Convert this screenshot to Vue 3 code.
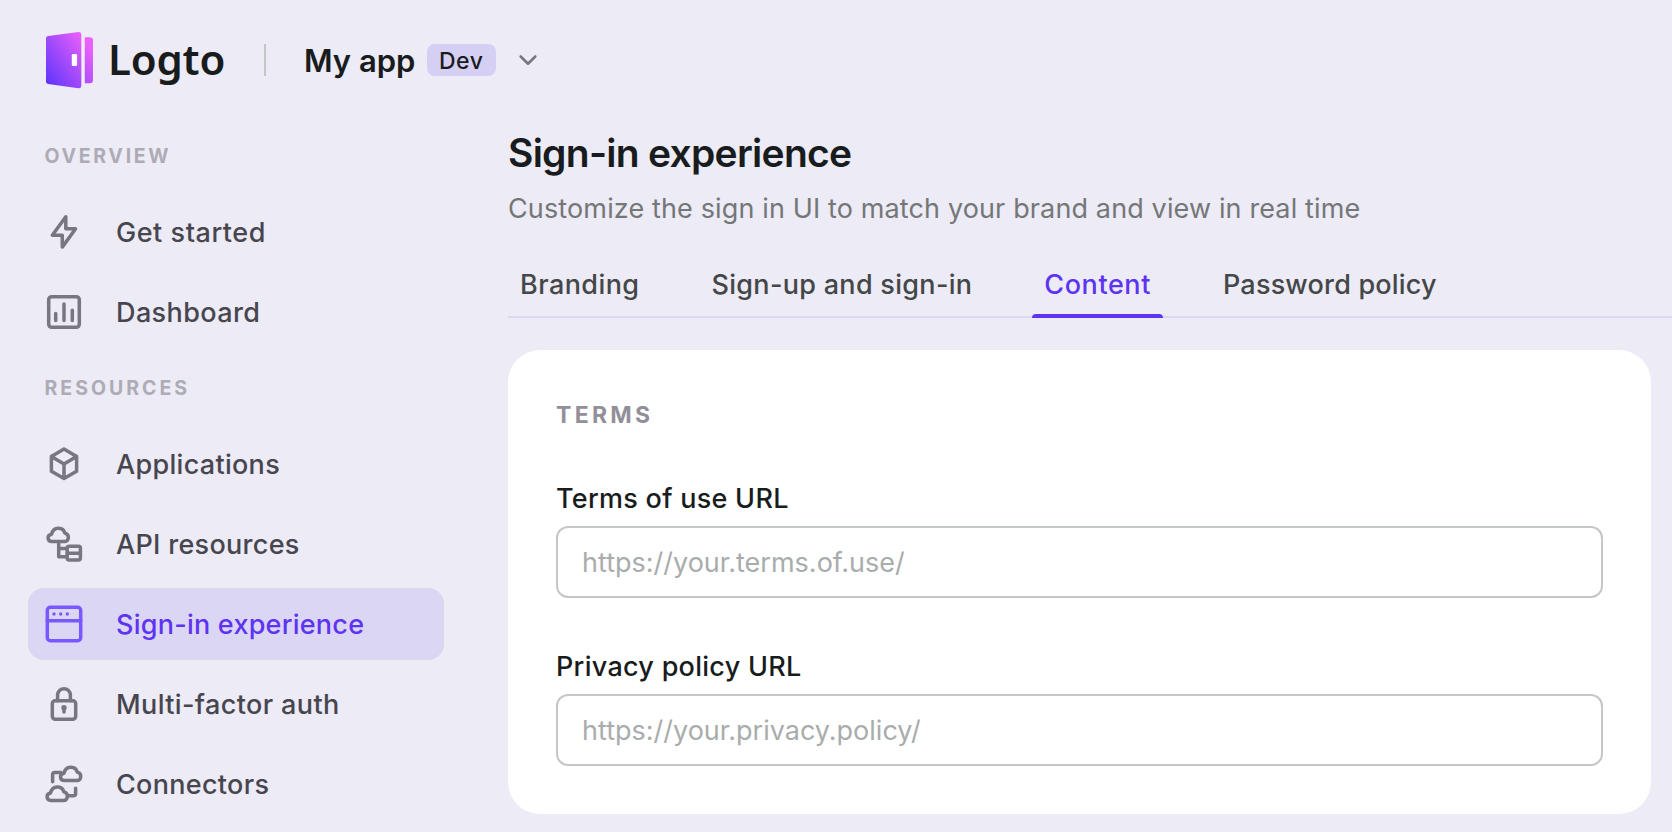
<script setup>
const sections = [
  {
    title: 'OVERVIEW',
    id: 'overview',
    items: [
      { id: 'bolt', label: 'Get started' },
      { id: 'chart', label: 'Dashboard' },
    ],
  },
  {
    title: 'RESOURCES',
    id: 'resources',
    items: [
      { id: 'box', label: 'Applications' },
      { id: 'api', label: 'API resources' },
      { id: 'web', label: 'Sign-in experience', active: true },
      { id: 'lock', label: 'Multi-factor auth' },
      { id: 'connectors', label: 'Connectors' },
    ],
  },
]
const tabs = [
  { id: 'branding', label: 'Branding' },
  { id: 'sign-up', label: 'Sign-up and sign-in' },
  { id: 'content', label: 'Content', active: true },
  { id: 'password', label: 'Password policy' },
]
const fields = [
  { id: 'terms', label: 'Terms of use URL', placeholder: 'https://your.terms.of.use/' },
  { id: 'privacy', label: 'Privacy policy URL', placeholder: 'https://your.privacy.policy/' },
]
const cloud = 'M8 17.6C2.9 17.6 2.8 10.9 7.6 10.2C9.2 2.4 19.2 2.4 20.8 9.1C25.9 10.2 25.3 17.6 20.4 17.6Z'
</script>

<template>
  <div class="page">
    <header class="topbar">
      <div class="brand">
        <svg class="logo" viewBox="0 0 47 57">
          <defs>
            <linearGradient id="door" x1="0" y1="48" x2="46" y2="16" gradientUnits="userSpaceOnUse">
              <stop offset="0" stop-color="#6236fb" />
              <stop offset="1" stop-color="#ec61fb" />
            </linearGradient>
          </defs>
          <path fill="url(#door)" d="M2.2 3.9L32.5.1Q35.3-.1 35.3 2.6V53.7Q35.3 56.4 32.5 56.2L2.2 52.1Q0 51.8 0 49.8V6.3Q0 4.2 2.2 3.9Z" />
          <path fill="url(#door)" d="M38.8 5.3H43.8Q47 5.3 47 8.5V48Q47 51.2 43.8 51.2H38.8Z" />
          <rect x="25.8" y="22" width="5.3" height="12" rx="1.3" fill="#fff" />
        </svg>
        <span class="word">Logto</span>
      </div>
      <div class="divider"></div>
      <div class="tenant">
        <span class="app-name">My app</span>
        <span class="badge">Dev</span>
        <svg class="chevron" viewBox="0 0 40 40"><path d="M12.7 16.5L20 23.7L27.3 16.5" /></svg>
      </div>
    </header>

    <div class="body">
      <aside class="sidebar">
        <section v-for="s in sections" :key="s.id" class="section">
          <div class="section-title" :class="s.id">{{ s.title }}</div>
          <nav class="items">
            <a v-for="i in s.items" :key="i.id" class="item" :class="[i.id, { active: i.active }]">
              <svg class="icon" viewBox="0 0 40 40">
                <path v-if="i.id === 'bolt'" d="M21.8 4.8L8.3 23.2H18.3V35.1L31.6 16.8H21.8Z" />
                <g v-else-if="i.id === 'chart'">
                  <rect x="4.7" y="4.7" width="30.6" height="30.6" rx="3" />
                  <path d="M11.7 21.6V28.4M20 12V28.4M28.3 18.3V28.4" />
                </g>
                <path v-else-if="i.id === 'box'" d="M20 5.1L32.6 12.4V27.3L20 34.6L7.4 27.3V12.4ZM7.4 12.4L20 19.9L32.6 12.4M20 19.9V34.6" />
                <g v-else-if="i.id === 'api'">
                  <path :d="cloud" />
                  <path d="M14.7 17.6V32.8H22.5M14.7 24.6H22.5M23.2 29.2H36.4" />
                  <rect x="23.2" y="22.2" width="13.2" height="13.9" rx="2" />
                </g>
                <g v-else-if="i.id === 'web'">
                  <rect x="3.3" y="3.3" width="33.4" height="33.4" rx="3" />
                  <path d="M3.3 16.7H36.7" />
                  <g class="solid">
                    <circle cx="10" cy="10" r="1.7" />
                    <circle cx="16.7" cy="10" r="1.7" />
                    <circle cx="23.3" cy="10" r="1.7" />
                  </g>
                </g>
                <g v-else-if="i.id === 'lock'">
                  <rect x="8.3" y="16.7" width="23.4" height="18.6" rx="3" />
                  <path d="M13.6 16.7V11.1A6.4 6.4 0 0 1 26.4 11.1V16.7M20 24V28" />
                  <circle class="solid" cx="20" cy="23.8" r="2.7" />
                </g>
                <g v-else>
                  <path :d="cloud" transform="translate(12.4 -1)" />
                  <path :d="cloud" transform="translate(-1 18.8)" />
                  <path d="M8.6 17.8V10.6Q8.6 8.4 10.8 8.4H17M31.6 24.3V29.5Q31.6 31.7 29.4 31.7H24.4" />
                </g>
              </svg>
              <span class="label">{{ i.label }}</span>
            </a>
          </nav>
        </section>
      </aside>

      <main class="main">
        <h1>Sign-in experience</h1>
        <p class="subtitle">Customize the sign in UI to match your brand and view in real time</p>
        <nav class="tabs">
          <a v-for="t in tabs" :key="t.id" class="tab" :class="[t.id, { active: t.active }]">{{ t.label }}</a>
        </nav>
        <section class="card">
          <h2 class="card-title">TERMS</h2>
          <div v-for="f in fields" :key="f.id" class="field">
            <label class="field-label" :for="f.id">{{ f.label }}</label>
            <input :id="f.id" type="text" :placeholder="f.placeholder" />
          </div>
        </section>
      </main>
    </div>
  </div>
</template>

<style>
body {
  margin: 0;
  background: #ecebf6;
}
</style>

<style scoped>
.page {
  box-sizing: border-box;
  height: 832px;
  overflow: hidden;
  background: #ecebf6;
  font-family: Inter, "Liberation Sans", sans-serif;
  font-size: 27px;
}
.topbar {
  display: flex;
  align-items: center;
  height: 120px;
  padding-left: 46px;
}
.brand {
  display: flex;
  align-items: center;
  width: 218px;
}
.logo {
  width: 47px;
  height: 57px;
}
.word {
  margin-left: 15px;
  padding-bottom: 3px;
  font-family: "Noto Sans", sans-serif;
  font-size: 42px;
  font-weight: 600;
  line-height: 56px;
  letter-spacing: -0.2px;
  color: #191c1d;
}
.divider {
  width: 2px;
  height: 32px;
  background: #c4c7c7;
}
.tenant {
  display: flex;
  align-items: center;
  margin-left: 38px;
}
.app-name {
  width: 123px;
  font-size: 31px;
  font-weight: 600;
  color: #191c1d;
}
.badge {
  box-sizing: border-box;
  width: 69px;
  height: 32px;
  padding-left: 12px;
  border-radius: 8px;
  background: #d6cff4;
  font-size: 23px;
  font-weight: 500;
  line-height: 34px;
  letter-spacing: 0.5px;
  color: #191c1d;
}
.chevron {
  width: 40px;
  height: 40px;
  margin-left: 12px;
  fill: none;
  stroke: #78767f;
  stroke-width: 2.6;
  stroke-linecap: round;
  stroke-linejoin: round;
}
.body {
  display: flex;
}
.sidebar {
  display: flex;
  flex-direction: column;
  gap: 20px;
  width: 416px;
  padding: 16px 64px 0 28px;
}
.section-title {
  height: 40px;
  padding-left: 16.5px;
  font-size: 19.5px;
  font-weight: 700;
  line-height: 40px;
  color: #aeabb5;
}
.section-title.overview {
  letter-spacing: 2.7px;
}
.section-title.resources {
  letter-spacing: 3px;
}
.items {
  display: flex;
  flex-direction: column;
  gap: 8px;
  margin-top: 20px;
}
.item {
  display: flex;
  align-items: center;
  gap: 32px;
  height: 72px;
  padding-left: 16px;
  border-radius: 16px;
  color: #47464e;
  font-weight: 500;
  letter-spacing: 0.3px;
}
.item.bolt {
  letter-spacing: 0.54px;
}
.item.chart {
  letter-spacing: 0.4px;
}
.item.web {
  letter-spacing: 0.24px;
}
.item.lock {
  letter-spacing: 0.38px;
}
.item.active {
  background: #dbd6f4;
  color: #5d34f2;
}
.icon {
  width: 40px;
  height: 40px;
  fill: none;
  stroke: #78767f;
  stroke-width: 3.5;
  stroke-linecap: round;
  stroke-linejoin: round;
}
.active .icon {
  stroke: #7958ff;
}
.solid {
  fill: #78767f;
  stroke: none;
}
.active .solid {
  fill: #7958ff;
}
.main {
  flex: 1;
  padding-top: 9px;
}
h1 {
  margin: 0;
  font-size: 39px;
  font-weight: 600;
  line-height: 48px;
  letter-spacing: -0.73px;
  color: #191c1d;
}
.subtitle {
  margin: 12px 0 0;
  line-height: 40px;
  letter-spacing: 0.13px;
  color: #747778;
}
.tabs {
  display: flex;
  gap: 48px;
  height: 52px;
  margin-top: 35px;
  border-bottom: 2px solid #dcd7f5;
}
.tab {
  position: relative;
  padding: 0 12px;
  font-weight: 500;
  line-height: 42px;
  color: #444748;
}
.tab.branding {
  letter-spacing: 0.42px;
}
.tab.sign-up {
  letter-spacing: 0.3px;
}
.tab.content {
  letter-spacing: 0.58px;
}
.tab.password {
  letter-spacing: 0.2px;
}
.tab.active {
  color: #5d34f2;
}
.tab.active::after {
  content: "";
  position: absolute;
  left: 0;
  right: 0;
  bottom: -2px;
  height: 4px;
  border-radius: 4px 4px 0 0;
  background: #5d34f2;
}
.card {
  box-sizing: border-box;
  display: flex;
  flex-direction: column;
  gap: 48px;
  width: 1143px;
  height: 464px;
  margin-top: 32px;
  padding: 48px;
  border-radius: 32px;
  background: #fff;
}
.card-title {
  height: 32px;
  margin: 0;
  font-size: 23px;
  font-weight: 700;
  line-height: 34px;
  letter-spacing: 3.3px;
  color: #928f9a;
}
.field {
  display: flex;
  flex-direction: column;
  gap: 8px;
}
.field-label {
  height: 40px;
  font-weight: 500;
  line-height: 42px;
  letter-spacing: 0.28px;
  color: #191c1d;
}
input {
  box-sizing: border-box;
  width: 100%;
  height: 72px;
  padding: 0 24px;
  border: 2px solid #c4c7c7;
  border-radius: 12px;
  outline: none;
  background: #fff;
  font: inherit;
  color: #191c1d;
}
input::placeholder {
  color: #a9acac;
  opacity: 1;
}
</style>
